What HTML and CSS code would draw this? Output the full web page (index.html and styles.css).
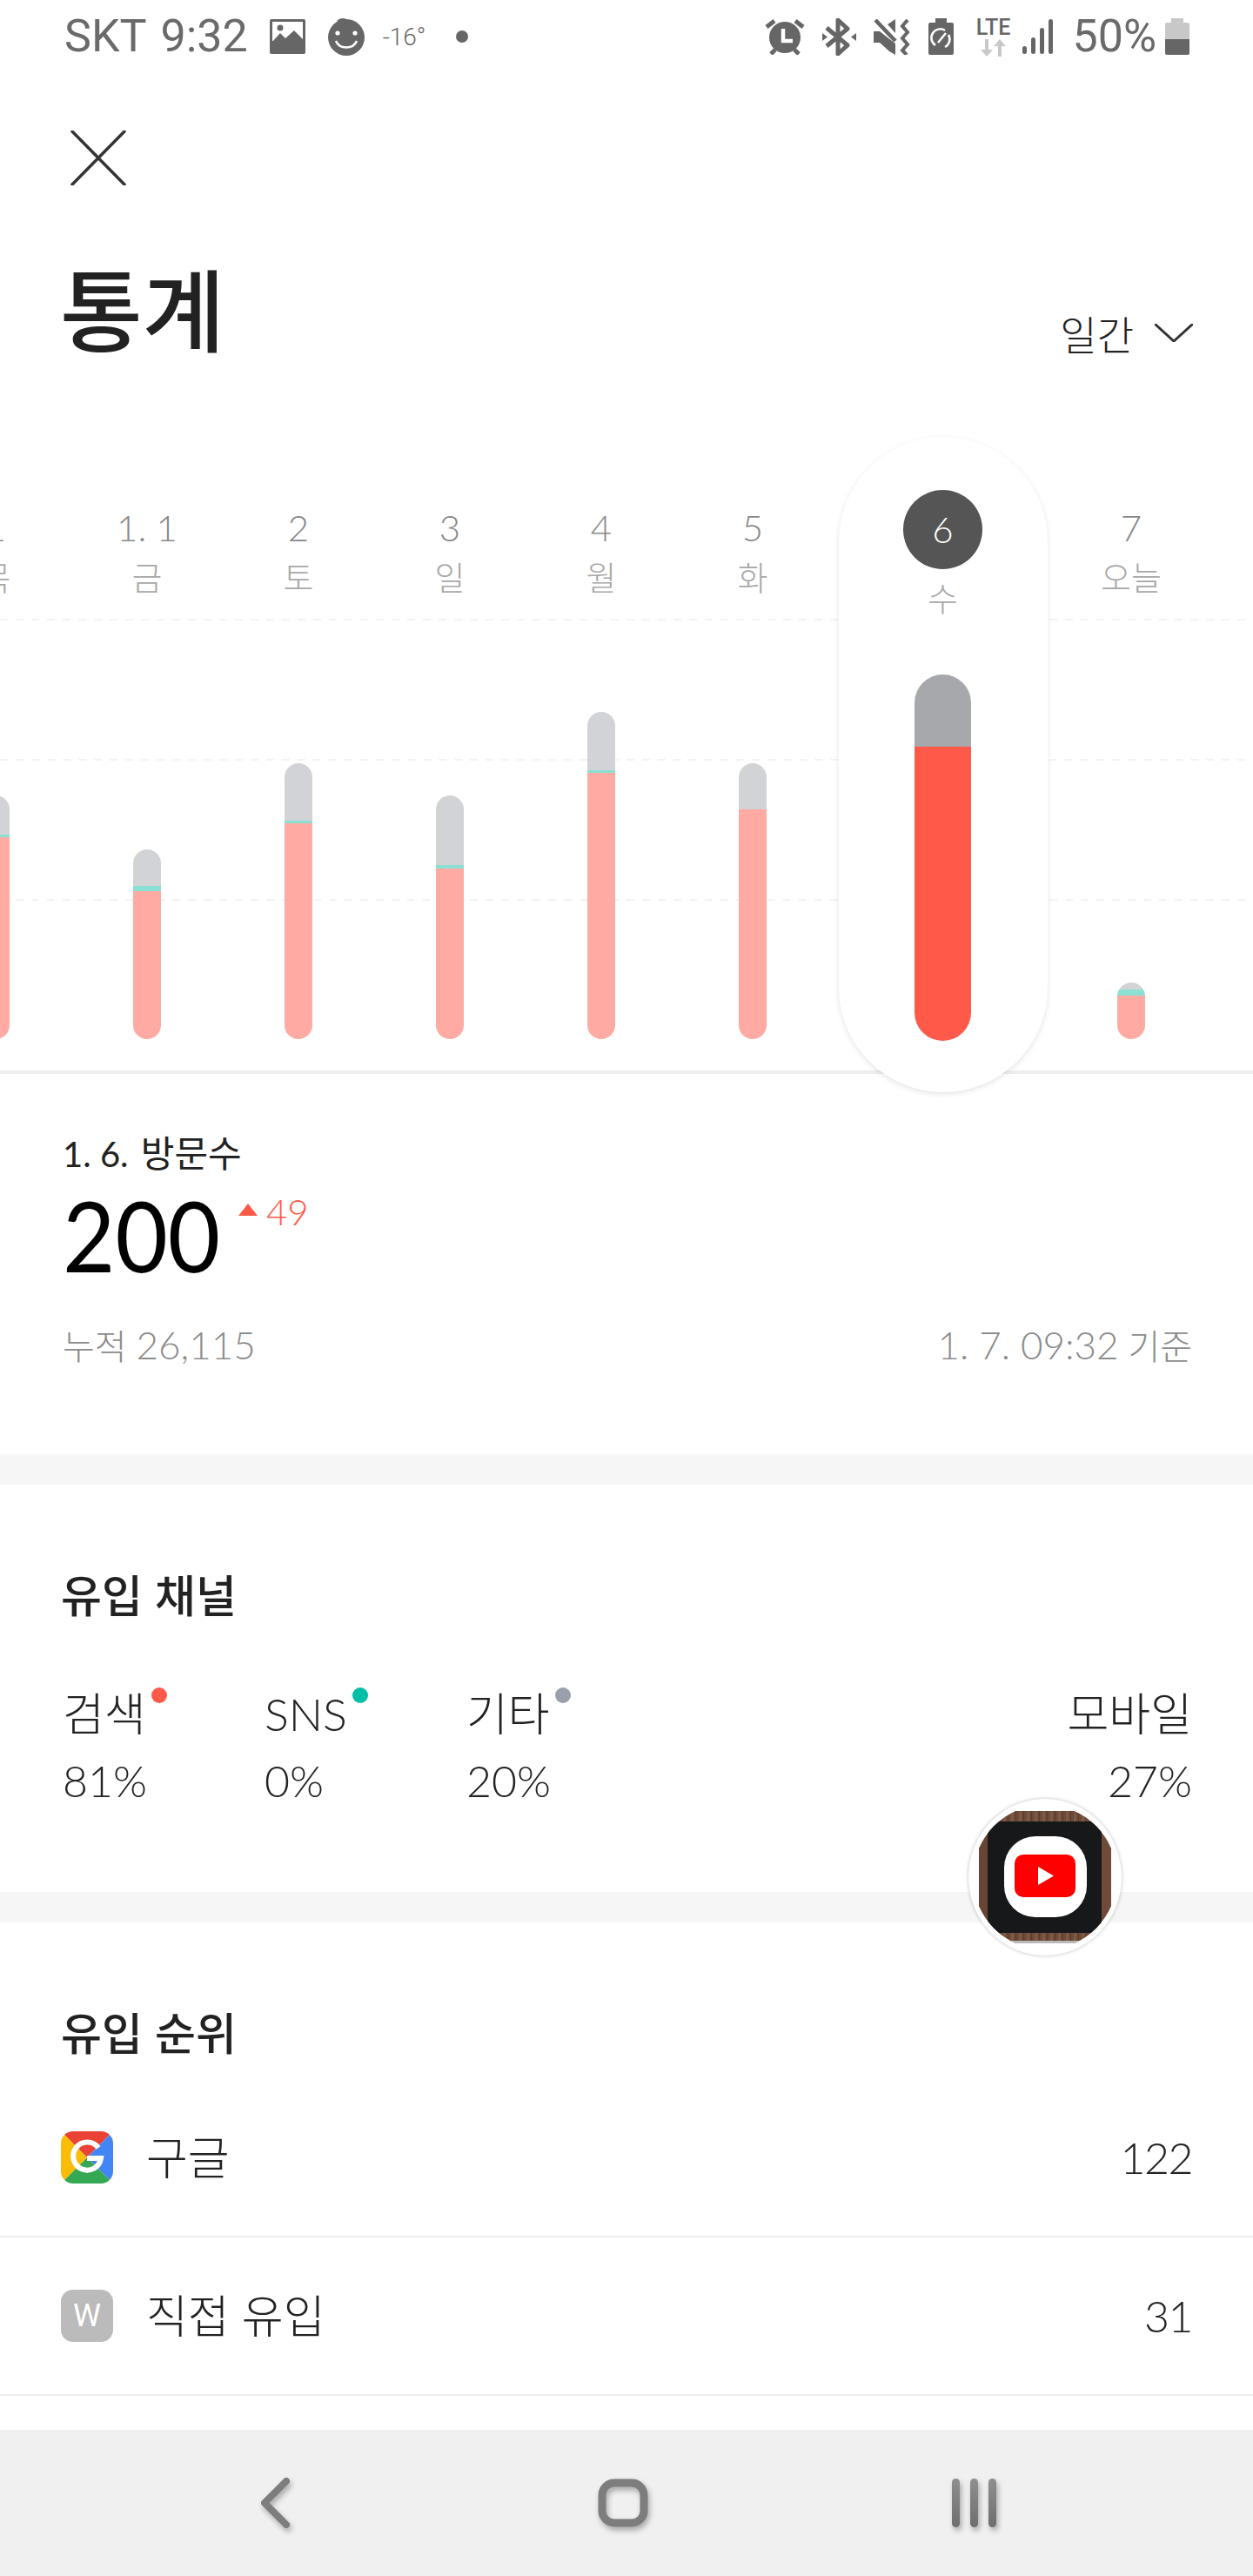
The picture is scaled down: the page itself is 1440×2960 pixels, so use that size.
FILE: index.html
```html
<!DOCTYPE html>
<html lang="ko">

<head>
    <meta charset="UTF-8">
    <meta name="viewport" content="width=device-width, initial-scale=1.0">
    <title>통계</title>
    <link rel="stylesheet" href="styles.css">
</head>

<body>
    <div class="screen">
        <!-- Status bar -->
        <div class="status-bar">
            <div class="status-left">
                <span class="status-text">SKT&nbsp;9:32</span>
                <svg class="icon-picture" width="41" height="40" viewBox="0 0 41 40">
                    <rect width="41" height="40" rx="2" fill="#666" />
                    <rect x="3" y="3" width="35" height="22" fill="#fff" />
                    <path d="M3 34V26L12 16L18 22L28 13L38 23V34Z" fill="#666" />
                    <circle cx="12" cy="10" r="3.5" fill="#666" />
                </svg>
                <svg class="icon-smile" width="42" height="44" viewBox="0 0 42 44">
                    <path d="M10 4C14 0 20 0 24 4L15 6Z" fill="#666" />
                    <circle cx="21" cy="23" r="21" fill="#666" />
                    <circle cx="11" cy="18" r="2.6" fill="#fff" />
                    <circle cx="31" cy="18" r="2.6" fill="#fff" />
                    <path d="M9 27C13 37 29 37 33 27" fill="none" stroke="#fff" stroke-width="2.5" />
                </svg>
                <span class="status-temp">-16°</span>
                <span class="status-dot"></span>
            </div>
            <div class="status-right">
                <svg width="46" height="42" viewBox="0 0 46 42">
                    <circle cx="23" cy="22" r="18" fill="#666" />
                    <path d="M2 10L11 3M35 3L44 10M7 41L12 36M39 41L34 36" stroke="#666" stroke-width="5" />
                    <path d="M21 12V26H32" fill="none" stroke="#fff" stroke-width="4.5" />
                </svg>
                <svg width="39" height="43" viewBox="0 0 39 43">
                    <path d="M5 11L29 31L18 41V2L29 12L5 32" fill="none" stroke="#666" stroke-width="5" stroke-linejoin="round" />
                    <path d="M0 17L6 21.500L0 26ZM39 17L33 21.500L39 26Z" fill="#666" />
                </svg>
                <svg width="43" height="41" viewBox="0 0 43 41">
                    <path d="M0 14H7L25 28V41L18 37L7 27H0Z" fill="#666" />
                    <path d="M2 1L25 25" stroke="#666" stroke-width="4.500" />
                    <path d="M16 6L25 0V16Z" fill="#666" />
                    <path d="M39 1L33 8L39 15L33 22L39 29L33 36L38 41" fill="none" stroke="#666" stroke-width="4" />
                </svg>
                <svg width="29" height="42" viewBox="0 0 29 42">
                    <path d="M8 0H21V5H27Q29 5 29 7V40Q29 42 27 42H2Q0 42 0 40V7Q0 5 2 5H8Z" fill="#666" />
                    <path d="M8 31A10 10 0 0 1 19 14M23 19A10 10 0 0 1 19 33M11 28L20 17" fill="none" stroke="#fff" stroke-width="2.500" />
                </svg>
                <div class="lte">
                    <span class="lte-text">LTE</span>
                    <svg width="30" height="20" viewBox="0 0 30 20">
                        <path d="M5 0H9V12H14L7 20L0 12H5ZM20 20H24V8H29L22 0L15 8H20Z" fill="#c8c8c8" />
                    </svg>
                </div>
                <div class="signal">
                    <span class="signal-bar signal-bar-1"></span>
                    <span class="signal-bar signal-bar-2"></span>
                    <span class="signal-bar signal-bar-3"></span>
                    <span class="signal-bar signal-bar-4"></span>
                </div>
                <span class="status-text status-percent">50%</span>
                <svg class="icon-battery" width="28" height="42" viewBox="0 0 28 42">
                    <path d="M7 0H21V5H26Q28 5 28 7V24H0V7Q0 5 2 5H7Z" fill="#c8c8c8" />
                    <path d="M0 24H28V40Q28 42 26 42H2Q0 42 0 40Z" fill="#666" />
                </svg>
            </div>
        </div>

        <!-- Header -->
        <div class="toolbar">
            <svg width="64" height="63" viewBox="0 0 64 63">
                <path d="M2 1L62 62M62 1L2 62" stroke="#333" stroke-width="3.500" stroke-linecap="round" />
            </svg>
        </div>
        <div class="title-row">
            <h1 class="title">통계</h1>
            <div class="period">
                <span>일간</span>
                <svg width="44" height="21" viewBox="0 0 44 21">
                    <path d="M1 1L22 20L43 1" fill="none" stroke="#333" stroke-width="3" stroke-linecap="round" />
                </svg>
            </div>
        </div>

        <!-- Chart -->
        <div class="chart">
            <div class="grid-lines">
                <div class="grid-line"></div>
                <div class="grid-line"></div>
                <div class="grid-line"></div>
            </div>
            <div class="chart-columns">
                <div class="day">
                    <div class="day-num">1</div>
                    <div class="day-name">목</div>
                    <div class="bar">
                        <div class="bar-other" style="height:45px"></div>
                        <div class="bar-sns" style="height:3px"></div>
                        <div class="bar-search" style="height:232px"></div>
                    </div>
                </div>
                <div class="day">
                    <div class="day-num">1. 1</div>
                    <div class="day-name">금</div>
                    <div class="bar">
                        <div class="bar-other" style="height:42px"></div>
                        <div class="bar-sns" style="height:6px"></div>
                        <div class="bar-search" style="height:170px"></div>
                    </div>
                </div>
                <div class="day">
                    <div class="day-num">2</div>
                    <div class="day-name">토</div>
                    <div class="bar">
                        <div class="bar-other" style="height:66px"></div>
                        <div class="bar-sns" style="height:3px"></div>
                        <div class="bar-search" style="height:248px"></div>
                    </div>
                </div>
                <div class="day">
                    <div class="day-num">3</div>
                    <div class="day-name">일</div>
                    <div class="bar">
                        <div class="bar-other" style="height:80px"></div>
                        <div class="bar-sns" style="height:4px"></div>
                        <div class="bar-search" style="height:196px"></div>
                    </div>
                </div>
                <div class="day">
                    <div class="day-num">4</div>
                    <div class="day-name">월</div>
                    <div class="bar">
                        <div class="bar-other" style="height:67px"></div>
                        <div class="bar-sns" style="height:3px"></div>
                        <div class="bar-search" style="height:306px"></div>
                    </div>
                </div>
                <div class="day">
                    <div class="day-num">5</div>
                    <div class="day-name">화</div>
                    <div class="bar">
                        <div class="bar-other" style="height:53px"></div>
                        <div class="bar-search" style="height:264px"></div>
                    </div>
                </div>
                <div class="day day-selected">
                    <div class="day-card">
                        <div class="day-num">6</div>
                        <div class="day-name">수</div>
                        <div class="bar">
                            <div class="bar-other" style="height:83px"></div>
                            <div class="bar-search" style="height:338px"></div>
                        </div>
                    </div>
                </div>
                <div class="day">
                    <div class="day-num">7</div>
                    <div class="day-name">오늘</div>
                    <div class="bar">
                        <div class="bar-other" style="height:8px"></div>
                        <div class="bar-sns" style="height:7px"></div>
                        <div class="bar-search" style="height:50px"></div>
                    </div>
                </div>
            </div>
        </div>

        <!-- Visit summary -->
        <div class="summary">
            <div class="summary-label">1. 6. <span class="summary-label-name">방문수</span></div>
            <div class="summary-value">
                <span class="summary-count">200</span>
                <span class="summary-triangle"></span>
                <span class="summary-diff">49</span>
            </div>
            <div class="summary-footer">
                <span>누적 <span class="footer-num">26,115</span></span>
                <span><span class="footer-num">1. 7. 09:32</span> 기준</span>
            </div>
        </div>

        <div class="divider"></div>

        <!-- Channels -->
        <div class="channels">
            <h2 class="section-title">유입 채널</h2>
            <div class="channel-row">
                <div class="channel">
                    <div class="channel-name">검색<span class="channel-dot dot-search"></span></div>
                    <div class="channel-value">81%</div>
                </div>
                <div class="channel">
                    <div class="channel-name">SNS<span class="channel-dot dot-sns"></span></div>
                    <div class="channel-value">0%</div>
                </div>
                <div class="channel">
                    <div class="channel-name">기타<span class="channel-dot dot-other"></span></div>
                    <div class="channel-value">20%</div>
                </div>
                <div class="channel channel-mobile">
                    <div class="channel-name">모바일</div>
                    <div class="channel-value">27%</div>
                </div>
            </div>
        </div>

        <div class="divider"></div>

        <!-- Ranking -->
        <div class="ranking">
            <h2 class="section-title">유입 순위</h2>
            <div class="rank-row">
                <svg class="rank-icon" width="60" height="60" viewBox="0 0 60 60">
                    <defs>
                        <clipPath id="googleClip">
                            <rect width="60" height="60" rx="14" />
                        </clipPath>
                    </defs>
                    <g clip-path="url(#googleClip)">
                        <path d="M0 0H60L30 30Z" fill="#ea4335" />
                        <path d="M60 0V60L30 30Z" fill="#4285f4" />
                        <path d="M60 60H0L30 30Z" fill="#34a853" />
                        <path d="M0 60V0L30 30Z" fill="#fbbc05" />
                    </g>
                    <path d="M43 19A16 16 0 1 0 46 31H30" fill="none" stroke="#fff" stroke-width="6" />
                </svg>
                <span class="rank-name">구글</span>
                <span class="rank-value">122</span>
            </div>
            <div class="rank-row">
                <div class="rank-icon rank-icon-w">W</div>
                <span class="rank-name">직접 유입</span>
                <span class="rank-value">31</span>
            </div>
        </div>

        <!-- Navigation bar -->
        <div class="nav-bar">
            <svg class="nav-icon" width="36" height="58" viewBox="0 0 36 58">
                <defs>
                    <linearGradient id="navGrad" x1="0" y1="0" x2="0" y2="1">
                        <stop offset="0" stop-color="#8f8f8f" />
                        <stop offset="1" stop-color="#6e6e6e" />
                    </linearGradient>
                </defs>
                <path d="M31 4L6 29L31 54" fill="none" stroke="#7d7d7d" stroke-width="8" stroke-linecap="round" stroke-linejoin="round" />
            </svg>
            <svg class="nav-icon nav-home" width="58" height="56" viewBox="0 0 58 56">
                <rect x="5" y="5" width="48" height="46" rx="14" fill="none" stroke="#7d7d7d" stroke-width="9" />
            </svg>
            <svg class="nav-icon" width="52" height="56" viewBox="0 0 52 56">
                <rect x="0" y="0" width="9" height="56" rx="4.500" fill="url(#navGrad)" />
                <rect x="21" y="0" width="9" height="56" rx="4.500" fill="url(#navGrad)" />
                <rect x="42" y="0" width="9" height="56" rx="4.500" fill="url(#navGrad)" />
            </svg>
        </div>

        <!-- Floating app bubble -->
        <div class="bubble">
            <svg width="152" height="152" viewBox="0 0 152 152">
                <defs>
                    <clipPath id="bubbleClip">
                        <circle cx="76" cy="76" r="83" />
                    </clipPath>
                    <pattern id="woodTop" width="9" height="12" patternUnits="userSpaceOnUse">
                        <rect width="9" height="12" fill="#6e4a39" />
                        <rect x="1" width="3" height="12" fill="#7d5a48" />
                        <rect x="6" width="1" height="12" fill="#5a3a2b" />
                    </pattern>
                    <linearGradient id="woodSide" x1="0" y1="0" x2="1" y2="0">
                        <stop offset="0" stop-color="#6a4535" />
                        <stop offset="0.5" stop-color="#5a3a2c" />
                        <stop offset="1" stop-color="#714c3b" />
                    </linearGradient>
                </defs>
                <g clip-path="url(#bubbleClip)">
                    <rect width="152" height="152" fill="url(#woodSide)" />
                    <rect width="152" height="12" fill="url(#woodTop)" />
                    <rect y="140" width="152" height="9" fill="url(#woodTop)" />
                    <rect y="149" width="152" height="3" fill="#b9b9b9" />
                    <rect x="10" y="12" width="131" height="128" rx="5" fill="#17181a" />
                    <rect x="29" y="29" width="95" height="93" rx="36" fill="#fff" />
                    <rect x="41" y="50" width="70" height="49" rx="10" fill="#f00" />
                    <path d="M68 64L86 74.500L68 85Z" fill="#fff" />
                </g>
            </svg>
        </div>
    </div>
</body>

</html>
```

FILE: styles.css
```css
/* Basic reset */
* {
    margin: 0;
    padding: 0;
    box-sizing: border-box;
}

body {
    font-family: 'Lato', 'Noto Sans CJK KR', sans-serif;
    font-weight: 300;
    background-color: #ffffff;
    color: #222222;
}

.screen {
    position: relative;
    width: 1440px;
    height: 2960px;
    overflow: hidden;
    display: flex;
    flex-direction: column;
}

/* Status bar */
.status-bar {
    height: 84px;
    flex-shrink: 0;
    display: flex;
    justify-content: space-between;
    align-items: center;
    padding: 0 73px 0 74px;
}

.status-left,
.status-right {
    display: flex;
    align-items: center;
}

.status-text {
    font-family: 'Roboto', sans-serif;
    font-weight: 400;
    font-size: 52px;
    line-height: 84px;
    color: #6a6a6a;
    word-spacing: 3px;
}

.icon-picture {
    margin-left: 25px;
}

.icon-smile {
    margin-left: 26px;
}

.status-temp {
    font-family: 'Roboto', sans-serif;
    font-weight: 300;
    font-size: 28px;
    color: #666666;
    margin-left: 21px;
}

.status-dot {
    width: 14px;
    height: 14px;
    border-radius: 50%;
    background-color: #666666;
    margin-left: 35px;
}

.status-right {
    gap: 20px;
}

.lte {
    display: flex;
    flex-direction: column;
    align-items: center;
    margin-left: 6px;
    padding-top: 2px;
    gap: 3px;
}

.lte-text {
    font-family: 'Roboto', sans-serif;
    font-weight: 500;
    font-size: 25px;
    line-height: 20px;
    color: #666666;
}

.signal {
    display: flex;
    align-items: flex-end;
    gap: 5px;
    height: 40px;
    margin-left: -6px;
}

.signal-bar {
    width: 5px;
    border-radius: 3px;
    background-color: #666666;
}

.signal-bar-1 {
    height: 9px;
}

.signal-bar-2 {
    height: 19px;
}

.signal-bar-3 {
    height: 30px;
}

.signal-bar-4 {
    height: 40px;
}

.status-percent {
    margin-left: 2px;
}

.icon-battery {
    margin-left: -10px;
}

/* Header */
.toolbar {
    height: 190px;
    flex-shrink: 0;
    padding: 66px 0 0 81px;
}

.title-row {
    height: 228px;
    flex-shrink: 0;
    display: flex;
    justify-content: space-between;
    align-items: flex-start;
    padding: 14px 69px 0 69px;
}

.title {
    font-family: 'Noto Sans CJK KR', sans-serif;
    font-size: 103px;
    font-weight: 500;
    line-height: 130px;
    color: #222222;
}

.period {
    display: flex;
    align-items: center;
    gap: 24px;
    font-family: 'Noto Sans CJK KR', sans-serif;
    font-size: 46px;
    font-weight: 300;
    line-height: 60px;
    margin-top: 64px;
}

/* Chart */
.chart {
    position: relative;
    height: 732px;
    flex-shrink: 0;
    border-bottom: 4px solid #eeeeee;
}

.grid-lines {
    position: absolute;
    top: 209px;
    left: 0;
    right: 0;
    display: flex;
    flex-direction: column;
    gap: 159px;
}

.grid-line {
    height: 2px;
    background-image: repeating-linear-gradient(to right, #f3f3f3 0 9px, transparent 9px 18px);
}

.chart-columns {
    position: relative;
    display: flex;
    height: 100%;
    margin-left: -92px;
}

.day {
    width: 174px;
    flex-shrink: 0;
    display: flex;
    flex-direction: column;
    align-items: center;
    padding: 79px 0 36px;
}

.day-num {
    font-size: 42px;
    line-height: 50px;
    color: #888888;
    white-space: pre;
}

.day-name {
    font-family: 'Noto Sans CJK KR', sans-serif;
    font-size: 38px;
    font-weight: 300;
    line-height: 50px;
    margin-top: 6px;
    color: #a8a8a8;
}

.bar {
    width: 32px;
    margin-top: auto;
    border-radius: 16px;
    overflow: hidden;
}

.bar-other {
    background-color: #d2d3d6;
}

.bar-sns {
    background-color: #89e0d3;
}

.bar-search {
    background-color: #ffaaa3;
}

.day-selected {
    width: 261px;
    padding: 0 0 0 2px;
    z-index: 2;
}

.day-card {
    width: 240px;
    height: 753px;
    flex-shrink: 0;
    border-radius: 120px;
    background-color: #ffffff;
    box-shadow: 0 2px 6px rgba(0, 0, 0, 0.11);
    display: flex;
    flex-direction: column;
    align-items: center;
    padding: 61px 0 59px;
}

.day-card .day-num {
    width: 91px;
    height: 91px;
    border-radius: 50%;
    background-color: #555555;
    color: #ffffff;
    line-height: 91px;
    text-align: center;
}

.day-card .day-name {
    margin-top: 7px;
}

.day-card .bar {
    width: 65px;
    border-radius: 33px;
}

.day-card .bar-other {
    background-color: #a6a8ac;
}

.day-card .bar-search {
    background-color: #ff5a49;
}

/* Visit summary */
.summary {
    height: 437px;
    flex-shrink: 0;
    padding: 66px 70px 0 72px;
}

.summary-label {
    font-size: 40px;
    font-weight: 400;
    line-height: 50px;
}

.summary-label-name {
    font-size: 42px;
    margin-left: 4px;
}

.summary-value {
    display: flex;
    align-items: flex-start;
    height: 118px;
    margin-top: 9px;
}

.summary-count {
    width: 176px;
    font-size: 112px;
    font-weight: 400;
    line-height: 118px;
    color: #000000;
    transform: scaleX(0.93);
    transform-origin: left center;
}

.summary-triangle {
    width: 0;
    height: 0;
    margin: 23px 10px 0 26px;
    border-left: 11px solid transparent;
    border-right: 11px solid transparent;
    border-bottom: 14px solid #ff5a49;
}

.summary-diff {
    font-size: 42px;
    line-height: 50px;
    margin-top: 7px;
    color: #ff5a49;
}

.summary-footer {
    display: flex;
    justify-content: space-between;
    margin-top: 42px;
    font-size: 40px;
    line-height: 50px;
    color: #8c8c8c;
}

.footer-num {
    font-size: 44px;
}

.divider {
    height: 35px;
    flex-shrink: 0;
    background-color: #f6f6f6;
}

/* Channels */
.channels {
    height: 468px;
    flex-shrink: 0;
    padding: 90px 70px 0;
}

.section-title {
    font-family: 'Noto Sans CJK KR', sans-serif;
    font-size: 51px;
    font-weight: 500;
    line-height: 70px;
    color: #222222;
}

.channel-row {
    display: flex;
    margin-top: 68px;
}

.channel {
    width: 232px;
    padding-left: 2px;
}

.channel-name {
    position: relative;
    width: fit-content;
    font-size: 52px;
    line-height: 70px;
}

.channel-value {
    font-size: 50px;
    line-height: 60px;
    margin-top: 12px;
}

.channel-dot {
    position: absolute;
    top: 5px;
    right: -24px;
    width: 18px;
    height: 18px;
    border-radius: 50%;
}

.dot-search {
    background-color: #ff5a49;
}

.dot-sns {
    background-color: #00bfa5;
}

.dot-other {
    background-color: #9aa0ab;
}

.channel-mobile {
    margin-left: auto;
    width: auto;
    text-align: right;
}

.channel-mobile .channel-name {
    margin-left: auto;
}

/* Ranking */
.ranking {
    flex: 1;
    padding: 90px 0 0;
    overflow: hidden;
}

.ranking .section-title {
    padding-left: 70px;
    margin-bottom: 20px;
}

.rank-row {
    display: flex;
    align-items: center;
    height: 182px;
    padding: 0 70px;
    border-bottom: 2px solid #eeeeee;
}

.rank-icon {
    flex-shrink: 0;
    width: 60px;
    height: 60px;
    margin-right: 38px;
}

.rank-icon-w {
    display: flex;
    justify-content: center;
    align-items: center;
    border-radius: 14px;
    background-color: #bbbbbb;
    color: #ffffff;
    font-family: 'Roboto', sans-serif;
    font-size: 36px;
    font-weight: 400;
}

.rank-name {
    flex: 1;
    font-size: 52px;
    line-height: 70px;
}

.rank-value {
    font-size: 50px;
    line-height: 70px;
    letter-spacing: -1.5px;
}

/* Navigation bar */
.nav-bar {
    height: 168px;
    flex-shrink: 0;
    display: flex;
    align-items: center;
    background-color: #f0f0f0;
    padding-left: 298px;
    gap: 349px;
}

.nav-home {
    margin-left: 4px;
}

.nav-icon {
    filter: drop-shadow(2px 4px 3px rgba(0, 0, 0, 0.3));
}

/* Floating app bubble */
.bubble {
    position: absolute;
    top: 2067px;
    left: 1113px;
    width: 176px;
    height: 180px;
    display: flex;
    justify-content: center;
    align-items: center;
    border-radius: 50%;
    background-color: #ffffff;
    box-shadow: 0 0 4px rgba(0, 0, 0, 0.25);
    z-index: 5;
}
```
